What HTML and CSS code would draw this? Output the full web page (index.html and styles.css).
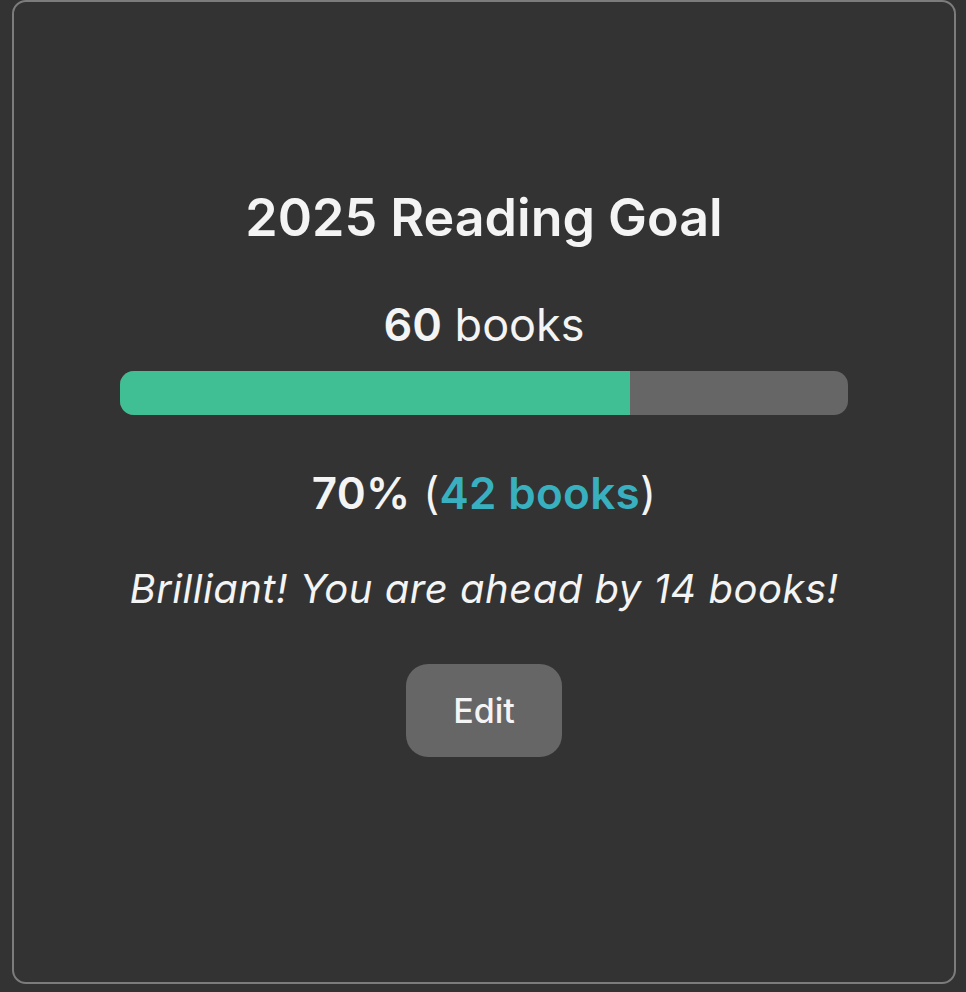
FILE: index.html
```html
<!DOCTYPE html>
<html><head>
<title>Reading Goal</title>
<link rel="stylesheet" href="styles.css">
</head><body>

<div class="card goal">
  <h2 class="goal-title">2025 Reading Goal</h2>
  <div class="goal-target"><b>60</b> books</div>
  <div class="progress">
    <div class="progress-fill" style="width: 70%"></div>
  </div>
  <div class="goal-done"><b>70%</b> (<span class="count">42 books</span>)</div>
  <p class="goal-note">Brilliant! You are ahead by 14 books!</p>
  <button class="btn">Edit</button>
</div>

</body></html>
```

FILE: styles.css
```css
html {
  background: #333;
  }
body {
  margin: 0;
  padding: 0 10px 8px 12px;
  font-family: Inter, "Open Sans", sans-serif;
  color: #f4f4f4;
  }
.card {
  box-sizing: border-box;
  height: 984px;
  border: 2px solid #7c7c7c;
  border-radius: 14px;
  background: #333;
  }
.goal {
  display: flex;
  flex-direction: column;
  align-items: center;
  padding-top: 184px;
  }
.goal-title {
  margin: 0;
  font-size: 52px;
  line-height: 64px;
  font-weight: 600;
  }
.goal-target {
  margin-top: 47px;
  font-size: 45px;
  line-height: 56px;
  }
.goal-target b,
.goal-done b {
  font-weight: 600;
  }
.progress {
  margin-top: 18px;
  width: 728px;
  height: 44px;
  border-radius: 14px;
  background: #666;
  overflow: hidden;
  }
.progress-fill {
  height: 100%;
  background: #3fbf93;
  }
.goal-done {
  margin-top: 50px;
  font-size: 44px;
  line-height: 56px;
  letter-spacing: 0.3px;
  }
.goal-done .count {
  color: #38b0bf;
  font-weight: 600;
  }
.goal-note {
  margin: 43px 0 0;
  font-size: 40px;
  line-height: 50px;
  font-style: italic;
  letter-spacing: 0.5px;
  }
.btn {
  margin-top: 50px;
  width: 156px;
  height: 93px;
  border: 0;
  border-radius: 22px;
  background: #666;
  color: #f4f4f4;
  font-family: inherit;
  font-size: 34px;
  font-weight: 500;
  }
```
